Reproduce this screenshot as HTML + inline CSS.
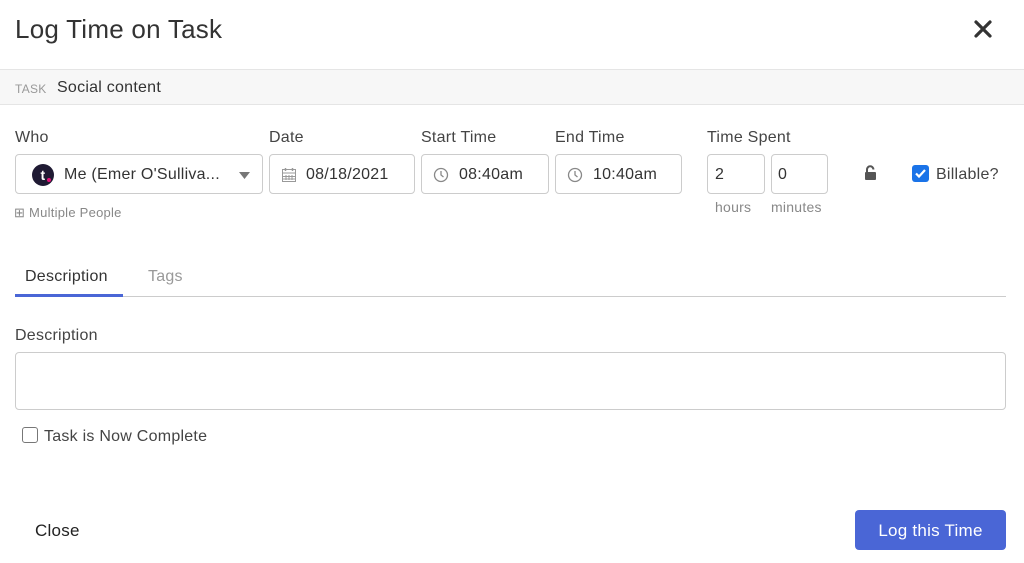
<!DOCTYPE html>
<html><head><style>
*{box-sizing:border-box}
body{margin:0;width:1024px;height:563px;background:#fff;font-family:"Liberation Sans",sans-serif;color:#333;position:relative;overflow:hidden;letter-spacing:0.25px}
.a{position:absolute}
.lbl{font-size:16px;color:#444}
.box{position:absolute;border:1px solid #ccc;border-radius:4px;height:40px;top:154px;font-size:16px;color:#333;display:flex;align-items:center;padding-top:2px}
.sm{font-size:14px;color:#888}
</style></head><body>
<div class="a" style="left:15px;top:14px;font-size:26px;color:#333">Log Time on Task</div>
<svg class="a" style="left:973px;top:19px" width="20" height="20"><path d="M3 3L17 17M17 3L3 17" stroke="#333" stroke-width="3.2" stroke-linecap="round"/></svg>
<div class="a" style="left:0;top:69px;width:1024px;height:36px;background:#f7f7f7;border-top:1px solid #e5e5e5;border-bottom:1px solid #e5e5e5"></div>
<div class="a" style="left:15px;top:82px;font-size:12px;color:#999">TASK</div>
<div class="a" style="left:57px;top:79px;font-size:16px;color:#333">Social content</div>
<div class="a lbl" style="left:15px;top:129px">Who</div>
<div class="a lbl" style="left:269px;top:129px">Date</div>
<div class="a lbl" style="left:421px;top:129px">Start Time</div>
<div class="a lbl" style="left:555px;top:129px">End Time</div>
<div class="a lbl" style="left:707px;top:129px">Time Spent</div>
<div class="box" style="left:15px;width:248px">
 <div style="margin-left:16px;width:22px;height:22px;border-radius:50%;background:#1f1a33;color:#fff;font-weight:bold;font-size:14px;text-align:center;line-height:22px;position:relative">t<span style="position:absolute;right:3px;bottom:4px;width:4px;height:4px;background:#e3137a;border-radius:50%"></span></div>
 <span style="margin-left:10px">Me (Emer O'Sulliva...</span>
 <svg style="position:absolute;right:12px;top:17px" width="11" height="7"><path d="M0 0H11L5.5 7Z" fill="#777"/></svg>
</div>
<div class="box" style="left:269px;width:146px"><svg style="margin-left:11px" width="16" height="16"><rect x="1.5" y="2.5" width="13" height="12" fill="none" stroke="#999"/><path d="M1.5 6H14.5M5 8V13M8 8V13M11 8V13M1.5 9.5H14.5M1.5 12H14.5" stroke="#999"/><path d="M4.5 1V4M11.5 1V4" stroke="#999" stroke-width="1.5"/></svg><span style="margin-left:9px">08/18/2021</span></div>
<div class="box" style="left:421px;width:128px"><svg style="margin-left:11px" width="16" height="16"><circle cx="8" cy="8" r="6.5" fill="none" stroke="#888" stroke-width="1.3"/><path d="M8 4V8L10.5 10" fill="none" stroke="#888" stroke-width="1.3"/></svg><span style="margin-left:10px">08:40am</span></div>
<div class="box" style="left:555px;width:127px"><svg style="margin-left:11px" width="16" height="16"><circle cx="8" cy="8" r="6.5" fill="none" stroke="#888" stroke-width="1.3"/><path d="M8 4V8L10.5 10" fill="none" stroke="#888" stroke-width="1.3"/></svg><span style="margin-left:10px">10:40am</span></div>
<div class="box" style="left:707px;width:58px;padding-left:7px">2</div>
<div class="box" style="left:771px;width:57px;padding-left:6px">0</div>
<div class="a sm" style="left:715px;top:199px">hours</div>
<div class="a sm" style="left:771px;top:199px">minutes</div>
<svg class="a" style="left:864px;top:165px" width="13" height="16"><path d="M3 7V4.5A3.2 3.2 0 0 1 9.4 4.5" fill="none" stroke="#555" stroke-width="2"/><rect x="1" y="7" width="11" height="8" rx="1" fill="#555"/></svg>
<div class="a" style="left:912px;top:165px;width:17px;height:17px;border-radius:3px;background:#1a73e8"><svg width="17" height="17"><path d="M4 8.5L7 11.5L13 5" fill="none" stroke="#fff" stroke-width="2.2"/></svg></div>
<div class="a lbl" style="left:936px;top:166px">Billable?</div>
<div class="a" style="left:14px;top:205px;font-size:13px;color:#888">⊞ Multiple People</div>
<div class="a" style="left:15px;top:296px;width:991px;height:1px;background:#ccc"></div>
<div class="a" style="left:15px;top:294px;width:108px;height:3px;background:#4a66d6"></div>
<div class="a lbl" style="left:25px;top:268px;color:#333">Description</div>
<div class="a lbl" style="left:148px;top:268px;color:#999">Tags</div>
<div class="a lbl" style="left:15px;top:327px">Description</div>
<div class="a" style="left:15px;top:352px;width:991px;height:58px;border:1px solid #ccc;border-radius:4px"></div>
<div class="a" style="left:22px;top:427px;width:16px;height:16px;border:1px solid #777;border-radius:3px"></div>
<div class="a lbl" style="left:44px;top:428px">Task is Now Complete</div>
<div class="a" style="left:35px;top:521px;font-size:17px;color:#222">Close</div>
<div class="a" style="left:855px;top:510px;width:151px;height:40px;border-radius:4px;background:#4a66d6;color:#fff;font-size:17px;text-align:center;line-height:42px">Log this Time</div>
</body></html>
